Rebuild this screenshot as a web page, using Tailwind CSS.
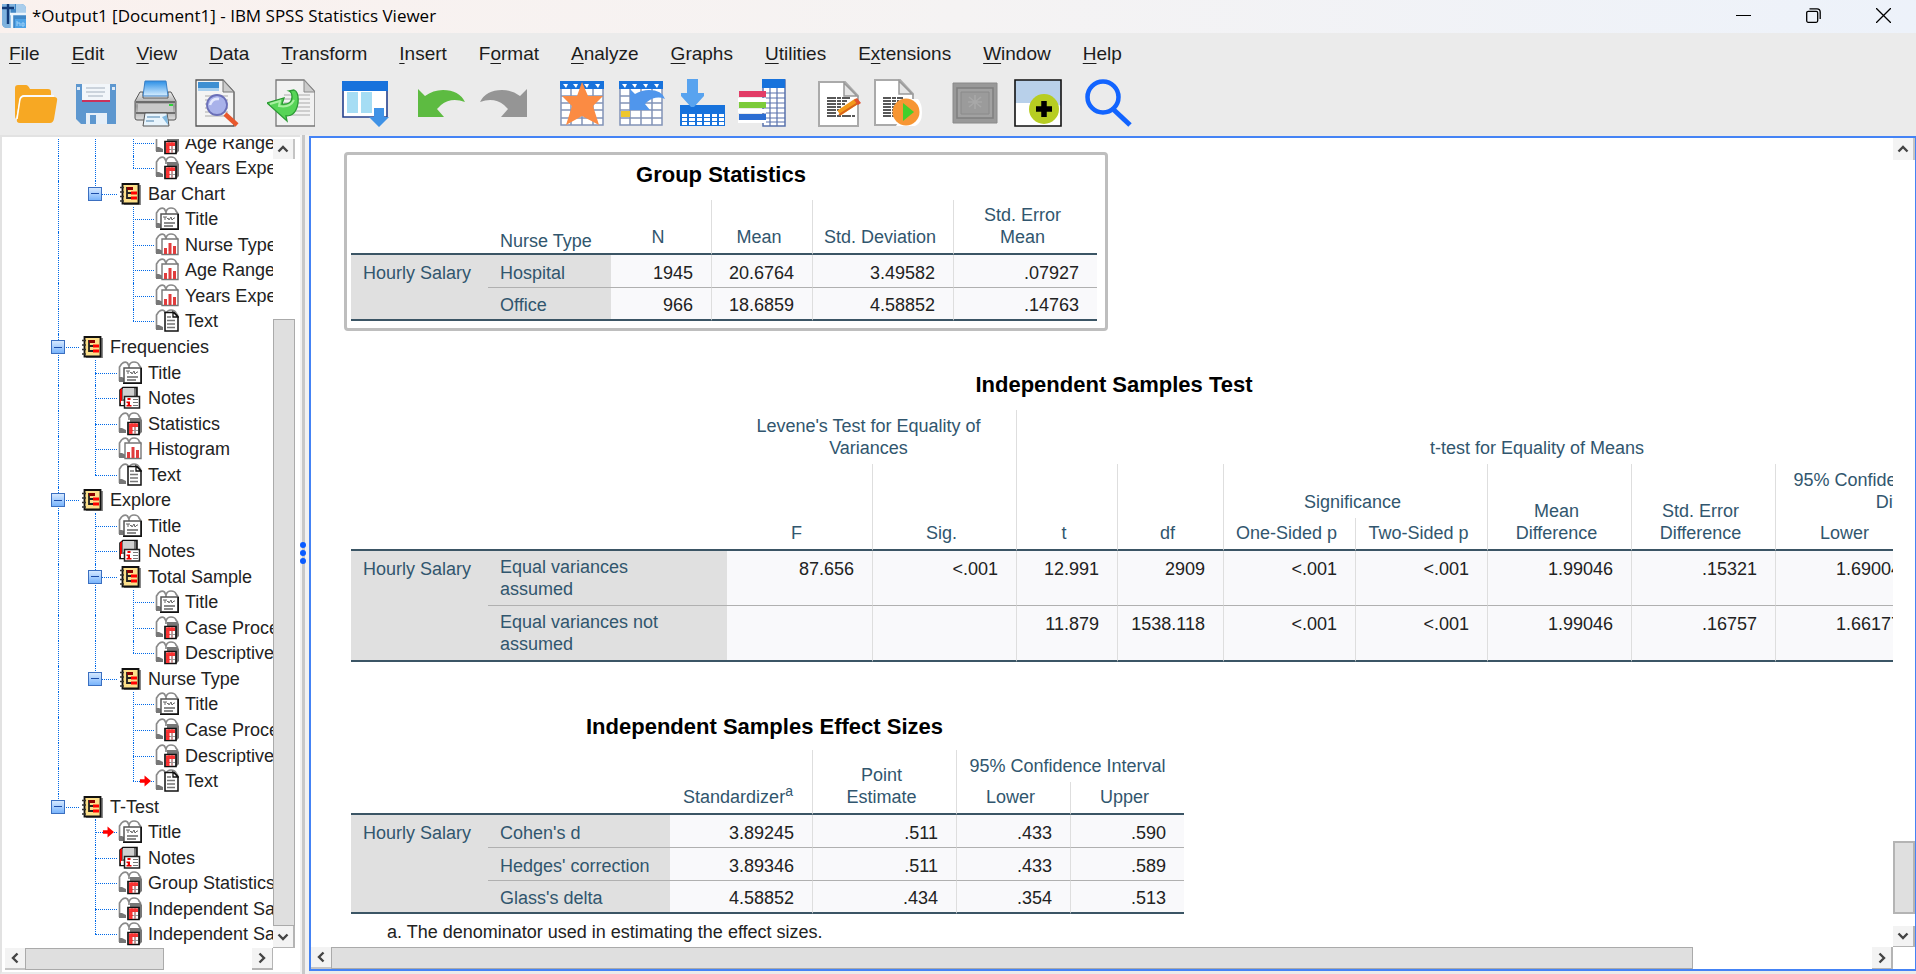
<!DOCTYPE html>
<html lang="en">
<head>
  <meta charset="utf-8">
  <meta name="viewport" content="width=device-width, initial-scale=1">
  <title>*Output1 [Document1] - IBM SPSS Statistics Viewer</title>
  <script src="https://cdn.jsdelivr.net/npm/@tailwindcss/browser@4"></script>
</head>
<body class="flex h-screen flex-col overflow-hidden bg-[#ebebeb] font-['Liberation_Sans',Arial,sans-serif] text-[18px] text-[#222]">

  <!-- Shared symbols -->
  <svg class="hidden" aria-hidden="true">
    <symbol id="book" viewBox="0 0 24 24">
      <path d="M1 20V6q0-4 5-4 3-2 5 2 3-4 6-3 6 0 6 5v14z" fill="#fff"/>
      <path d="M1.500 20V6l2-3q3-3 6-1l1.500 3V8M11 5q1-4 5-4t5 3l1.500 2v2" fill="none" stroke="#8a8a8a" stroke-width="1.700"/>
      <path d="M1 16h3l4 2v3H1z" fill="#777"/>
    </symbol>
    <symbol id="icon-title" viewBox="0 0 24 24">
      <use href="#book"/>
      <path d="M6 7h17v15H6z" fill="#fff" stroke="#555" stroke-width="1.500"/>
      <path d="M23.200 7v15.200H5" fill="none" stroke="#111" stroke-width="1.500"/>
      <path d="M8 10h4m-2 0v3m2-1l1-1 1 2 2-3 1 3 2-2 1 0" fill="none" stroke="#666" stroke-width="1"/>
      <path d="M9 16h11M9 19h9" stroke="#666" stroke-width="1.400"/>
    </symbol>
    <symbol id="icon-chart" viewBox="0 0 24 24">
      <use href="#book"/>
      <path d="M7 6h16v15.500H7z" fill="#fff" stroke="#777" stroke-width="1.400"/>
      <path d="M9 15h3v6H9zM13.500 10h3v11h-3zM18 13h3v8h-3z" fill="#e03c3c"/>
    </symbol>
    <symbol id="icon-text" viewBox="0 0 24 24">
      <use href="#book"/>
      <path d="M10 3.500h9l4 4V22H10z" fill="#fff" stroke="#111" stroke-width="1.500"/>
      <path d="M18 3v5h5z" fill="#fff" stroke="#111" stroke-width="1.300"/>
      <path d="M12 8h4M12 11.500h8M12 15h8M12 18.500h8" stroke="#777" stroke-width="1.400"/>
    </symbol>
    <symbol id="icon-table" viewBox="0 0 24 24">
      <use href="#book"/>
      <path d="M12 6h10l2 2v12l-2 2H12z" fill="#777"/>
      <path d="M10 10.500h11v12H10z" fill="#fff" stroke="#111" stroke-width="1.700"/>
      <path d="M11 11.500h9v2.500h-9zM11 14h3v8h-3z" fill="#f33"/>
      <path d="M14 11v11M17 11v11M11 14.500h9M11 18.500h9" stroke="#e33" stroke-width="1"/>
      <path d="M17 15v7M15 18.500h5" stroke="#999" stroke-width="1"/>
    </symbol>
    <symbol id="icon-notes" viewBox="0 0 24 24">
      <path d="M5 1.500h14v13h-3v5H2V4z" fill="#777" stroke="#111" stroke-width="1.600"/>
      <path d="M5 2h11v11H5z" fill="#d0d0d0"/>
      <path d="M2 4l2-2v12l-2 4z" fill="#e00"/>
      <path d="M3 15h4v4H3z" fill="#fff"/>
      <path d="M6.500 10.500h15v11.500h-15z" fill="#fff" stroke="#222" stroke-width="1.500"/>
      <path d="M9.500 12h3v2h-3zM8.500 15.500h3.500v3.500h1.500v1.500H8.500V19h1.200v-2H8.500z" fill="#e00"/>
      <path d="M15 13.500h5M15 16.500h5M15 19.500h5" stroke="#777" stroke-width="1.200"/>
    </symbol>
    <symbol id="icon-group" viewBox="0 0 24 24">
      <path d="M6 3h17v20H6z" fill="#888"/>
      <path d="M4.500 2h16v19.500h-16z" fill="#fde08a" stroke="#111" stroke-width="1.800"/>
      <path d="M2 5.500h4M2 10h4M2 14.500h4M2 19h4" stroke="#333" stroke-width="1.400"/>
      <path d="M9 5v12M9 6h5M9 11h4M9 16h4" stroke="#222" stroke-width="1.800"/>
      <path d="M9 5h6v3H9z" fill="#8a0000"/>
      <path d="M13 9.500h6v3h-6zM13 14.500h6v3h-6z" fill="#f00"/>
    </symbol>
    <symbol id="chevron" viewBox="0 0 12 12">
      <path d="M1.500 8.500L6 4l4.500 4.500" fill="none" stroke="#444" stroke-width="2.400"/>
    </symbol>
  </svg>

  <!-- Title bar -->
  <header class="flex h-[33px] shrink-0 items-center bg-linear-to-r from-[#faf1ee] via-[#f5f3f3] to-[#edf2fa] pr-[25px] pb-0.5 pl-0.5">
    <svg class="size-6" viewBox="0 0 24 24" aria-hidden="true">
      <rect width="24" height="24" rx="5" fill="#3f86c6"/>
      <path d="M14 0h5q5 0 5 5v4H14z" fill="#a9cdec"/>
      <path d="M0 0h13v5H9v19H5q-5 0-5-5z" fill="#7fb2de"/>
      <path d="M0 4h12M6 0v20" stroke="#123a78" stroke-width="2.400"/>
      <path d="M8 10h16M10 10v14" stroke="#eaf4fc" stroke-width="2.400"/>
      <path d="M13 15h11v9H13z" fill="#4ea2e6"/>
      <path d="M15 17v5m0-3h3v3M22 19h-2v3h2z" fill="none" stroke="#9fd0f7" stroke-width="1"/>
    </svg>
    <h1 class="ml-1.5 font-['Open_Sans',sans-serif] text-[17px] leading-[30px] text-black">*Output1 [Document1] - IBM SPSS Statistics Viewer</h1>
    <div class="ml-auto flex items-center gap-[55px]">
      <button aria-label="Minimize" class="size-[15px]"><svg viewBox="0 0 15 15"><path d="M0 7.500h15" stroke="#000"/></svg></button>
      <button aria-label="Restore" class="size-[15px]"><svg viewBox="0 0 15 15" fill="none" stroke="#000" stroke-width="1.300"><rect x=".7" y="3.300" width="11" height="11" rx="1.500"/><path d="M3.500.8H11q3.200 0 3.200 3.200v7"/></svg></button>
      <button aria-label="Close" class="size-[15px]"><svg viewBox="0 0 15 15"><path d="M0 0l15 15M15 0L0 15" stroke="#000" stroke-width="1.300"/></svg></button>
    </div>
  </header>

  <!-- Menu bar -->
  <nav class="flex h-10 shrink-0 items-center gap-8 pt-0.5 pl-[9px] text-[19px] text-[#1c1c1c]">
    <a href="#"><u class="underline-offset-3">F</u>ile</a>
    <a href="#"><u class="underline-offset-3">E</u>dit</a>
    <a href="#"><u class="underline-offset-3">V</u>iew</a>
    <a href="#"><u class="underline-offset-3">D</u>ata</a>
    <a href="#"><u class="underline-offset-3">T</u>ransform</a>
    <a href="#"><u class="underline-offset-3">I</u>nsert</a>
    <a href="#">F<u class="underline-offset-3">o</u>rmat</a>
    <a href="#"><u class="underline-offset-3">A</u>nalyze</a>
    <a href="#"><u class="underline-offset-3">G</u>raphs</a>
    <a href="#"><u class="underline-offset-3">U</u>tilities</a>
    <a href="#">E<u class="underline-offset-3">x</u>tensions</a>
    <a href="#"><u class="underline-offset-3">W</u>indow</a>
    <a href="#"><u class="underline-offset-3">H</u>elp</a>
  </nav>

  <!-- Toolbar -->
  <div class="flex h-[62px] shrink-0 items-start gap-[31px] pt-1.5 pl-3">
    <div class="flex gap-[27px]">
      <div class="flex gap-3">
        <button aria-label="Open" class="size-12">
          <svg viewBox="0 0 48 48"><path d="M3 9q0-3 3-3h8q2 0 4 4h18q3 0 3 3v3H12q-3 0-4 3L4 40q-1-1-1-3z" fill="#f7a823"/><path d="M12 18h30q4 0 3 4l-3 18q-1 4-4 4H8q-4 0-3-4l3-18q1-4 4-4z" fill="#f7a823"/><path d="M5 40l3-20q1-3 4-3h30" fill="none" stroke="#fff" stroke-width="1.500"/></svg>
        </button>
        <button aria-label="Save" class="size-12">
          <svg viewBox="0 0 48 48"><path d="M4 5h40v40H9l-5-5z" fill="#5d97cf"/><path d="M10 5h28v18H10z" fill="#f2f6fa"/><path d="M14 9h19M14 13h19M16 17h15" stroke="#bfc8d2" stroke-width="1.500"/><path d="M10 21h28v2H10z" fill="#c9325c"/><path d="M14 34h21v11H14z" fill="#e6eff8"/><path d="M18 36h6v9h-6z" fill="#5d97cf"/><path d="M5 8h3v3H5zM40 8h3v3h-3z" fill="#dfeaf5"/></svg>
        </button>
        <button aria-label="Print" class="size-12">
          <svg viewBox="0 0 48 48"><defs><linearGradient id="gp" x2="0" y2="1"><stop stop-color="#2b8fe6"/><stop offset="1" stop-color="#d9efff"/></linearGradient><linearGradient id="gb" x2="0" y2="1"><stop stop-color="#eee"/><stop offset=".5" stop-color="#999"/><stop offset="1" stop-color="#ddd"/></linearGradient></defs><path d="M8 13L3 22v17q0 2 2 2h37q2 0 2-2V22l-5-9h-3v6H11v-6z" fill="url(#gb)" stroke="#555"/><path d="M13 2h21l2 15H11z" fill="url(#gp)" stroke="#3a7fc4" stroke-width="1"/><path d="M4 23h39M4 34h39" stroke="#555" stroke-width="1.500"/><path d="M6 25h35v8H6z" fill="#c9c9c9"/><path d="M37 25h4v2h-4z" fill="#2fd43a"/><path d="M13 34h22l2 13H11z" fill="#e8f4fc" stroke="#555"/><path d="M15 38h13M14 42h8" stroke="#7fa8c8" stroke-width="1.500"/><path d="M30 38l5-2 1 10z" fill="#7fb8e0"/></svg>
        </button>
        <button aria-label="Print preview" class="size-12">
          <svg viewBox="0 0 48 48"><path d="M4 1h27l11 12v34H4z" fill="#f4f4f4" stroke="#555" stroke-width="1.300"/><path d="M31 1v12h11z" fill="#ccc" stroke="#777"/><path d="M6 3h21v9H6z" fill="#3e8fd2"/><path d="M6 9h21v3H6z" fill="#a8cfee"/><path d="M13 17h23M13 21h23M13 25h23M13 29h23M13 33h23M13 37h23" stroke="#aaa"/><path d="M33 35l12 11" stroke="#e8572c" stroke-width="4.500"/><circle cx="25" cy="26" r="10" fill="#a9b2ea" stroke="#6a6fb8" stroke-width="1.800"/><path d="M18 26q2-7 9-6" stroke="#e4e8fd" stroke-width="2.500" fill="none"/></svg>
        </button>
      </div>
      <button aria-label="Export" class="size-12">
        <svg viewBox="0 0 48 48"><path d="M9 1h28l11 12v34H9z" fill="#f2f2f2" stroke="#777" stroke-width="1.300"/><path d="M37 1v12h11z" fill="#ccc" stroke="#888"/><path d="M17 16h26M17 20h26M17 24h26M17 28h26M17 32h26M17 36h26" stroke="#aaa"/><path d="M0 24l17-5-2 6q10 1 10-7 0-5-3-6l5-1q5 2 4 13-2 13-12 13l1 5z" fill="#57d457" stroke="#2a9a33" stroke-width="1.300"/><path d="M3 25l10-3-1 5q11 2 15-6" stroke="#a8f0a0" stroke-width="2" fill="none"/></svg>
      </button>
      <button aria-label="Recall recent dialogs" class="size-12">
        <svg viewBox="0 0 48 48"><path d="M1 3h44v35H1z" fill="#fff" stroke="#23408e" stroke-width="1.600"/><path d="M0 2h46v10H0z" fill="#1772dc"/><path d="M5 13h11v21H5zM19 13h11v21H19z" fill="#a5ddf4"/><path d="M32 29h10v9h5L37 48 27 38h5z" fill="#3f92e6"/></svg>
      </button>
      <div class="flex gap-3.5">
        <button aria-label="Undo" class="size-12">
          <svg viewBox="0 0 48 48"><path d="M1 10l7 7Q16 11 26 11q16 0 22 12Q34 18 24 26q-3 3-4 4l7 8H1z" fill="#5dbb41"/></svg>
        </button>
        <button aria-label="Redo" class="size-12">
          <svg viewBox="0 0 48 48"><path d="M48 10l-7 7Q33 11 23 11 7 11 1 23q14-5 24 3 3 3 4 4l-7 8h26z" fill="#959595"/></svg>
        </button>
      </div>
    </div>
    <div class="flex gap-[29px]">
      <div class="flex gap-3">
        <button aria-label="Go to data" class="size-12">
          <svg viewBox="0 0 48 48"><path d="M3 3h42v43H3z" fill="#fff" stroke="#8294b8" stroke-width="1.500"/><path d="M13 9v37M24 9v37M35 9v37M3 17h42M3 24h42M3 31h42M3 39h42" stroke="#8294b8" stroke-width="1.500"/><path d="M2 2h44v8H2z" fill="#1772dc"/><path d="M5 5h5l-2 4zM15 5h5l-2 4zM26 5h5l-2 4zM37 5h5l-2 4z" fill="#fff"/><path d="M24 3l6 14h15L35 27l6 19-17-9-16 9 6-19L4 17h15z" fill="#fb8b43"/></svg>
        </button>
        <button aria-label="Go to case" class="size-12">
          <svg viewBox="0 0 48 48"><path d="M2 3h42v43H2z" fill="#fff" stroke="#8294b8" stroke-width="1.500"/><path d="M12 9v37M23 9v37M34 9v37M2 17h42M2 24h42M2 31h42M2 39h42" stroke="#8294b8" stroke-width="1.500"/><path d="M1 2h44v8H1z" fill="#1772dc"/><path d="M4 5h5l-2 4zM14 5h5l-2 4zM25 5h5l-2 4zM36 5h5l-2 4z" fill="#fff"/><path d="M3 32h9v6H3z" fill="#eec72c"/><path d="M12 10l5 5q7-4 14-4 13 0 16 9-9-4-18 3l-2 2 5 6H12z" fill="#5096ec"/></svg>
        </button>
        <button aria-label="Variables" class="size-12">
          <svg viewBox="0 0 48 48"><path d="M2 26h45v21H2z" fill="#1772dc"/><path d="M4 35h5v3H4zM11 35h6v3h-6zM19 35h5v3h-5zM26 35h6v3h-6zM34 35h5v3h-5zM41 35h5v3h-5zM4 39h5v3H4zM11 39h6v3h-6zM19 39h5v3h-5zM26 39h6v3h-6zM34 39h5v3h-5zM41 39h5v3h-5zM4 43h5v3H4zM11 43h6v3h-6zM19 43h5v3h-5zM26 43h6v3h-6zM34 43h5v3h-5zM41 43h5v3h-5z" fill="#fff"/><path d="M9 0h11v14h6v3L16 28h-3L3 17v-3h6z" fill="#58a3ef"/></svg>
        </button>
        <button aria-label="Use variable sets" class="size-12">
          <svg viewBox="0 0 48 48"><path d="M25 1h22v46H25z" fill="#fff" stroke="#5a73ad" stroke-width="1.500"/><path d="M32 9v38M39 9v38M25 14h22M25 19h22M25 24h22M25 29h22M25 34h22M25 39h22M25 43h22" stroke="#5a73ad" stroke-width="1.200"/><path d="M24 0h23v9H24z" fill="#1772dc"/><path d="M0 19h28v4H0zM0 30h28v4H0zM0 41h28v3H0z" fill="#fff"/><path d="M1 12h27v6H1z" fill="#e23d67"/><path d="M1 23h27v6H1z" fill="#7ccb3a"/><path d="M1 35h27v6H1z" fill="#2d6ed2"/></svg>
        </button>
      </div>
      <div class="flex gap-[11px]">
        <button aria-label="Edit script" class="size-12">
          <svg viewBox="0 0 48 48"><path d="M4 3h26l13 14v30H4z" fill="#fff" stroke="#aaa" stroke-width="2"/><path d="M29 4v13h13z" fill="#e6e6e6" stroke="#999" stroke-width="1.500"/><path d="M12 19h23M12 22h20M12 25h18M12 28h14M12 31h12M12 34h10M12 37h28" stroke="#222" stroke-width="1.500" stroke-dasharray="9 1 4 1"/><path d="M24 34l18-12" stroke="#f39a1c" stroke-width="6"/><path d="M24 36l19-12" stroke="#d8621a" stroke-width="2"/><path d="M42 19l4 5-3 2-4-5z" fill="#e0502e"/></svg>
        </button>
        <button aria-label="Run script" class="size-12">
          <svg viewBox="0 0 48 48"><path d="M1 1h25l13 14v31H1z" fill="#fff" stroke="#aaa" stroke-width="2"/><path d="M25 2v13h13z" fill="#e6e6e6" stroke="#999" stroke-width="1.500"/><path d="M9 19h20M9 22h16M9 25h14M9 28h12M9 31h10M9 34h11M9 37h13" stroke="#222" stroke-width="1.500" stroke-dasharray="8 1 4 1"/><path d="M38 20h6q4 4 4 14t-7 13H22z" fill="#fff"/><circle cx="32" cy="33" r="13.500" fill="#f79633"/><path d="M29 24l11 9-11 9z" fill="#43cf2b"/></svg>
        </button>
      </div>
      <div class="flex gap-[15px]">
        <button aria-label="Designate window" class="size-12" disabled>
          <svg viewBox="0 0 48 48"><path d="M2 4h44v40H2z" fill="#999" stroke="#8a8a8a"/><path d="M6 9h36v30H6z" fill="#a1a1a1" stroke="#7f7f7f" stroke-width="1.500"/><path d="M10 13h28v22H10z" fill="#9b9b9b" stroke="#8a8a8a"/><path d="M24 16v14M18 18l12 10M30 18L18 28M17 23h14" stroke="#a8a8a8" stroke-width="1.600"/></svg>
        </button>
        <button aria-label="Insert image" class="size-12">
          <svg viewBox="0 0 48 48"><path d="M1 1h46v46H1z" fill="#fff"/><path d="M1 1h46v26q-8-4-18-3H1z" fill="#b8d0ea"/><circle cx="30" cy="30" r="15" fill="#b7cd22"/><path d="M30 22v16M22 30h16" stroke="#000" stroke-width="5.500"/><path d="M1 1h46v46H1z" fill="none" stroke="#111" stroke-width="1.600"/></svg>
        </button>
      </div>
      <button aria-label="Search" class="-ml-1.5 size-12">
        <svg viewBox="0 0 48 48"><circle cx="18" cy="18" r="15.500" fill="none" stroke="#1264ff" stroke-width="4.500"/><path d="M29 31l16 15" stroke="#1264ff" stroke-width="5"/></svg>
      </button>
    </div>
  </div>

  <main class="flex min-h-0 flex-1">

    <!-- Outline pane -->
    <aside class="flex w-[300px] shrink-0 flex-col border-y-2 border-l-2 border-[#e2e2e2] border-b-[#ebebeb] bg-white pt-0.5">
      <div class="flex min-h-0 flex-1">
        <div class="min-w-0 flex-1 overflow-hidden">
          <ul id="outline" class="-mt-[9px] grid h-[817px] auto-rows-fr pl-[37px]"></ul>
        </div>
        <div class="mr-[5px] flex w-[22px] shrink-0 flex-col">
          <button aria-label="Scroll outline up" class="grid h-5 place-items-center border-r-2 border-[#c4c4c4] bg-[#f3f3f3]"><svg class="size-3"><use href="#chevron"/></svg></button>
          <div class="mt-40 flex-1 border border-[#aaa] bg-[#dfdfdf]"></div>
          <button aria-label="Scroll outline down" class="grid h-[22px] place-items-center border-r-2 border-b border-[#b4b4b4] bg-[#f3f3f3]"><svg class="size-3 rotate-180"><use href="#chevron"/></svg></button>
        </div>
      </div>
      <div class="mr-[27px] mb-0.5 flex h-[22px] shrink-0 pl-[3px]">
        <button aria-label="Scroll outline left" class="grid w-5 place-items-center border-b-2 border-[#c4c4c4] bg-[#f3f3f3]"><svg class="size-3 -rotate-90"><use href="#chevron"/></svg></button>
        <div class="w-[139px] border border-[#aaa] bg-[#dfdfdf]"></div>
        <button aria-label="Scroll outline right" class="ml-auto grid w-[21px] place-items-center border-r border-b-2 border-[#b4b4b4] bg-[#f3f3f3]"><svg class="size-3 rotate-90"><use href="#chevron"/></svg></button>
      </div>
    </aside>

    <!-- Splitter -->
    <div class="relative w-[9px] shrink-0 bg-[#f2f2f2] pl-0.5">
      <div class="h-full w-[3px] bg-[#c8c8c8]"></div>
      <div class="absolute top-[407px] left-0 flex flex-col gap-0.5">
        <span class="size-1.5 rounded-full bg-[#0a5cff]"></span>
        <span class="size-1.5 rounded-full bg-[#0a5cff]"></span>
        <span class="size-1.5 rounded-full bg-[#0a5cff]"></span>
      </div>
    </div>

    <!-- Output pane -->
    <section class="mt-px mb-[3px] flex min-w-0 flex-1 flex-col border-2 border-r border-[#4483f5] bg-white">
      <div class="flex min-h-0 flex-1">
        <div class="min-w-0 flex-1 overflow-hidden">

          <article class="mt-3.5 ml-[33px] w-fit rounded-sm border-3 border-[#bebebe] pt-[5px] pr-2 pb-[7px] pl-1">
            <h2 class="mb-2.5 pr-1.5 text-center text-[22px] leading-[30px] font-bold text-black">Group Statistics</h2>
            <table class="w-[746px] table-fixed border-separate border-spacing-0 text-right leading-[22px] [&_td]:bg-[#f9f9fb] [&_td]:pr-[18px] [&_th]:font-normal [&_th]:text-[#31566e]">
              <colgroup><col class="w-[137px]"><col class="w-[123px]"><col class="w-[100px]"><col class="w-[101px]"><col class="w-[141px]"><col class="w-[144px]"></colgroup>
              <thead>
                <tr class="h-[55px] text-center align-bottom [&>th]:border-b-2 [&>th]:border-b-[#3b5565] [&>th]:border-l-[#dedede] [&>th]:pr-1.5 [&>th]:pb-[5px]">
                  <th colspan="2" class="pl-[149px] text-left"><div class="-mb-1">Nurse Type</div></th>
                  <th>N</th>
                  <th class="border-l">Mean</th>
                  <th class="border-l">Std. Deviation</th>
                  <th class="border-l">Std. Error<br>Mean</th>
                </tr>
              </thead>
              <tbody>
                <tr class="h-[33px] [&>*]:border-b [&>*]:border-b-[#b0b0b0] [&>*]:pt-[3px] [&>td]:border-l-[#dedede]">
                  <th rowspan="2" class="!border-b-2 !border-b-[#3b5565] bg-[#e0e0e0] !pt-[7px] pl-3 text-left align-top">Hourly Salary</th>
                  <th class="bg-[#e0e0e0] pl-3 text-left">Hospital</th>
                  <td>1945</td><td class="border-l">20.6764</td><td class="border-l">3.49582</td><td class="border-l">.07927</td>
                </tr>
                <tr class="h-[33px] [&>*]:border-b-2 [&>*]:border-b-[#3b5565] [&>*]:pt-[3px] [&>td]:border-l-[#dedede]">
                  <th class="bg-[#e0e0e0] pl-3 text-left">Office</th>
                  <td>966</td><td class="border-l">18.6859</td><td class="border-l">4.58852</td><td class="border-l">.14763</td>
                </tr>
              </tbody>
            </table>
          </article>

          <article class="mt-[39px] pl-10">
            <h2 class="mb-2.5 pr-4 text-center text-[22px] leading-[30px] font-bold text-black">Independent Samples Test</h2>
            <table class="w-[1712px] table-fixed border-separate border-spacing-0 text-right leading-[22px] [&_td]:bg-[#f9f9fb] [&_td]:pr-[18px] [&_th]:font-normal [&_th]:text-[#31566e]">
              <colgroup><col class="w-[137px]"><col class="w-[239px]"><col class="w-[145px]"><col class="w-[144px]"><col class="w-[101px]"><col class="w-[106px]"><col class="w-[132px]"><col class="w-[132px]"><col class="w-[144px]"><col class="w-[144px]"><col class="w-[144px]"><col class="w-[144px]"></colgroup>
              <thead class="text-center align-bottom [&_th]:border-l-[#dedede] [&_th]:border-b-[#3b5565] [&_th]:pr-1.5 [&_th]:pb-[5px]">
                <tr class="h-[54px]">
                  <th colspan="2" rowspan="3" class="border-b-2"></th>
                  <th colspan="2">Levene's Test for Equality of<br>Variances</th>
                  <th colspan="8" class="border-l">t-test for Equality of Means</th>
                </tr>
                <tr class="h-[54px]">
                  <th rowspan="2" class="border-b-2">F</th>
                  <th rowspan="2" class="border-b-2 border-l">Sig.</th>
                  <th rowspan="2" class="border-b-2 border-l">t</th>
                  <th rowspan="2" class="border-b-2 border-l">df</th>
                  <th colspan="2" class="border-l">Significance</th>
                  <th rowspan="2" class="border-b-2 border-l">Mean<br>Difference</th>
                  <th rowspan="2" class="border-b-2 border-l">Std. Error<br>Difference</th>
                  <th colspan="2" class="border-l">95% Confidence Interval of the<br>Difference</th>
                </tr>
                <tr class="h-[33px]">
                  <th class="border-b-2 border-l">One-Sided p</th>
                  <th class="border-b-2 border-l">Two-Sided p</th>
                  <th class="border-b-2 border-l">Lower</th>
                  <th class="border-b-2 border-l">Upper</th>
                </tr>
              </thead>
              <tbody class="align-top [&_td]:border-l-[#dedede] [&_td]:pt-[7px]">
                <tr class="h-[55px] [&>*]:border-b [&>*]:border-b-[#b0b0b0]">
                  <th rowspan="2" class="!border-b-2 !border-b-[#3b5565] bg-[#e0e0e0] pt-[7px] pl-3 text-left">Hourly Salary</th>
                  <th class="bg-[#e0e0e0] pt-[5px] pl-3 text-left">Equal variances<br>assumed</th>
                  <td>87.656</td><td class="border-l">&lt;.001</td><td class="border-l">12.991</td><td class="border-l">2909</td><td class="border-l">&lt;.001</td><td class="border-l">&lt;.001</td><td class="border-l">1.99046</td><td class="border-l">.15321</td><td class="border-l">1.69004</td><td class="border-l">2.29088</td>
                </tr>
                <tr class="h-[56px] [&>*]:border-b-2 [&>*]:border-b-[#3b5565]">
                  <th class="bg-[#e0e0e0] pt-[5px] pl-3 text-left">Equal variances not<br>assumed</th>
                  <td></td><td class="border-l"></td><td class="border-l">11.879</td><td class="border-l">1538.118</td><td class="border-l">&lt;.001</td><td class="border-l">&lt;.001</td><td class="border-l">1.99046</td><td class="border-l">.16757</td><td class="border-l">1.66177</td><td class="border-l">2.31915</td>
                </tr>
              </tbody>
            </table>
          </article>

          <article class="mt-[50px] ml-10 w-fit">
            <h2 class="mb-2 pr-1.5 text-center text-[22px] leading-[30px] font-bold text-black">Independent Samples Effect Sizes</h2>
            <table class="w-[833px] table-fixed border-separate border-spacing-0 text-right leading-[22px] [&_td]:bg-[#f9f9fb] [&_td]:pr-[18px] [&_th]:font-normal [&_th]:text-[#31566e]">
              <colgroup><col class="w-[137px]"><col class="w-[182px]"><col class="w-[142px]"><col class="w-[144px]"><col class="w-[114px]"><col class="w-[114px]"></colgroup>
              <thead class="text-center align-bottom [&_th]:border-l-[#dedede] [&_th]:border-b-[#3b5565] [&_th]:pr-1.5 [&_th]:pb-[5px]">
                <tr class="h-8">
                  <th colspan="2" rowspan="2" class="border-b-2"></th>
                  <th rowspan="2" class="border-b-2">Standardizer<sup class="text-[14px]">a</sup></th>
                  <th rowspan="2" class="border-b-2 border-l">Point<br>Estimate</th>
                  <th colspan="2" class="border-l">95% Confidence Interval</th>
                </tr>
                <tr class="h-[33px]">
                  <th class="border-b-2 border-l">Lower</th>
                  <th class="border-b-2 border-l">Upper</th>
                </tr>
              </thead>
              <tbody class="[&_td]:border-l-[#dedede]">
                <tr class="h-[33px] [&>*]:border-b [&>*]:border-b-[#b0b0b0] [&>*]:pt-[3px]">
                  <th rowspan="3" class="!border-b-2 !border-b-[#3b5565] bg-[#e0e0e0] !pt-[7px] pl-3 text-left align-top">Hourly Salary</th>
                  <th class="bg-[#e0e0e0] pl-3 text-left">Cohen's d</th>
                  <td>3.89245</td><td class="border-l">.511</td><td class="border-l">.433</td><td class="border-l">.590</td>
                </tr>
                <tr class="h-[33px] [&>*]:border-b [&>*]:border-b-[#b0b0b0] [&>*]:pt-[3px]">
                  <th class="bg-[#e0e0e0] pl-3 text-left">Hedges' correction</th>
                  <td>3.89346</td><td class="border-l">.511</td><td class="border-l">.433</td><td class="border-l">.589</td>
                </tr>
                <tr class="h-[33px] [&>*]:border-b-2 [&>*]:border-b-[#3b5565] [&>*]:pt-[3px]">
                  <th class="bg-[#e0e0e0] pl-3 text-left">Glass's delta</th>
                  <td>4.58852</td><td class="border-l">.434</td><td class="border-l">.354</td><td class="border-l">.513</td>
                </tr>
              </tbody>
            </table>
            <p class="mt-[7px] pl-9 leading-[22px]">a. The denominator used in estimating the effect sizes.</p>
          </article>

        </div>
        <div class="flex w-[22px] shrink-0 flex-col">
          <button aria-label="Scroll up" class="grid h-[22px] place-items-center border-r-2 border-[#c4c4c4] bg-[#f3f3f3]"><svg class="size-3"><use href="#chevron"/></svg></button>
          <div class="mt-auto mb-3 h-[73px] border-2 border-[#b4b4b4] bg-[#dfdfdf]"></div>
          <button aria-label="Scroll down" class="grid h-[21px] place-items-center border-r-2 border-b border-[#b4b4b4] bg-[#f3f3f3]"><svg class="size-3 rotate-180"><use href="#chevron"/></svg></button>
        </div>
      </div>
      <div class="mr-[22px] flex h-[22px] shrink-0">
        <button aria-label="Scroll left" class="grid w-5 place-items-center border-b-2 border-[#c4c4c4] bg-[#f3f3f3]"><svg class="size-3 -rotate-90"><use href="#chevron"/></svg></button>
        <div class="mr-[179px] flex-1 border border-[#aaa] bg-[#dfdfdf]"></div>
        <button aria-label="Scroll right" class="grid w-[21px] place-items-center border-r-2 border-b border-[#b4b4b4] bg-[#f3f3f3]"><svg class="size-3 rotate-90"><use href="#chevron"/></svg></button>
      </div>
    </section>
  </main>

  <script>
    // guides: one character per tree level
    // "|" line, "." blank, "T" branch, "L" last branch, "E" expander, "e" last expander
    const rows = [
      ['||T', 'table', 'Age Range'],
      ['||L', 'table', 'Years Experience'],
      ['|e', 'group', 'Bar Chart'],
      ['|.T', 'title', 'Title'],
      ['|.T', 'chart', 'Nurse Type'],
      ['|.T', 'chart', 'Age Range'],
      ['|.T', 'chart', 'Years Experience'],
      ['|.L', 'text', 'Text'],
      ['E', 'group', 'Frequencies'],
      ['|T', 'title', 'Title'],
      ['|T', 'notes', 'Notes'],
      ['|T', 'table', 'Statistics'],
      ['|T', 'chart', 'Histogram'],
      ['|L', 'text', 'Text'],
      ['E', 'group', 'Explore'],
      ['|T', 'title', 'Title'],
      ['|T', 'notes', 'Notes'],
      ['|E', 'group', 'Total Sample'],
      ['||T', 'title', 'Title'],
      ['||T', 'table', 'Case Processing'],
      ['||L', 'table', 'Descriptives'],
      ['|e', 'group', 'Nurse Type'],
      ['|.T', 'title', 'Title'],
      ['|.T', 'table', 'Case Processing'],
      ['|.T', 'table', 'Descriptives'],
      ['|.L', 'text', 'Text', true],
      ['e', 'group', 'T-Test'],
      ['.T', 'title', 'Title', true],
      ['.T', 'notes', 'Notes'],
      ['.T', 'table', 'Group Statistics'],
      ['.T', 'table', 'Independent Samples'],
      ['.L', 'table', 'Independent Samples'],
    ];

    const full = '<i class="absolute inset-y-0 left-[19px] border-l border-dotted border-[#0069e8]"></i>';
    const half = '<i class="absolute top-0 bottom-1/2 left-[19px] border-l border-dotted border-[#0069e8]"></i>';
    const dash = '<i class="absolute top-1/2 -right-[3px] left-[19px] border-t border-dotted border-[#0069e8]"></i>';
    const box = '<button aria-label="Collapse" class="absolute top-1/2 left-[12px] grid size-3.5 -translate-y-1/2 place-items-center border border-[#3b6fc0] bg-linear-to-b from-[#d5e8ff] to-[#79b4fb]"><i class="h-px w-2 bg-[#1c4da8]"></i></button>';
    const arrow = '<svg class="absolute top-1/2 right-0 h-3 w-3 -translate-y-1/2" viewBox="0 0 13 12"><path d="M1 4h5V0l7 6-7 6V8H1z" fill="#f00"/></svg>';
    const guides = { '|': full, '.': '', T: full + dash, L: half + dash, E: full + dash + box, e: half + dash + box };

    document.getElementById('outline').innerHTML = rows.map(([levels, icon, label, current]) => {
      const cells = [...levels].map((g, i) => {
        const last = i === levels.length - 1;
        return `<span class="relative w-[37px] shrink-0 self-stretch nth-2:w-[38px]">${guides[g]}${last && current ? arrow : ''}</span>`;
      }).join('');
      return `<li class="flex min-h-0 items-center whitespace-nowrap">${cells}<svg class="mr-1.5 ml-1 size-6 shrink-0"><use href="#icon-${icon}"/></svg><a href="#" class="leading-5">${label}</a></li>`;
    }).join('');
  </script>
</body>
</html>
